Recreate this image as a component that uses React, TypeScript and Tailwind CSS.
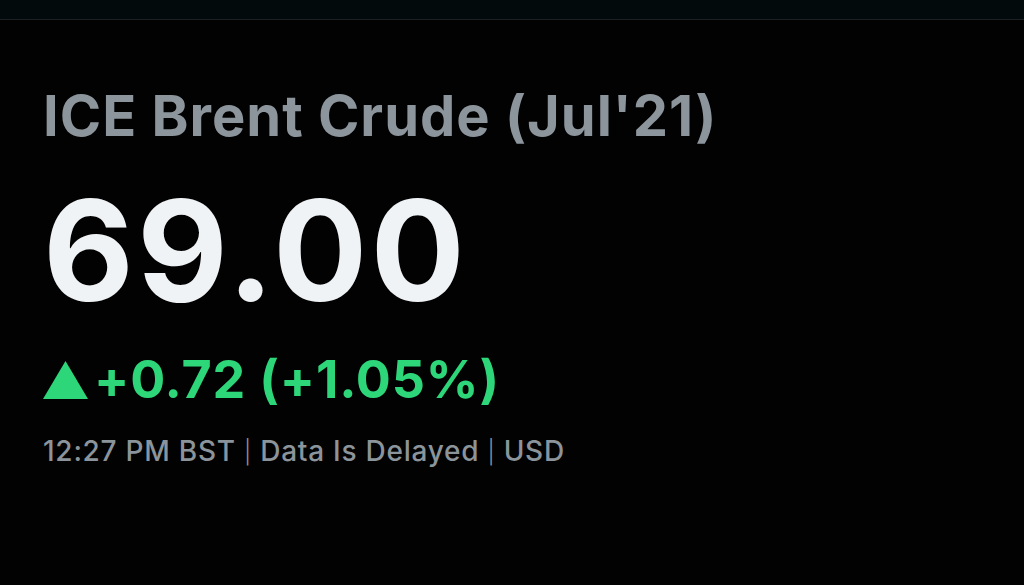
export default function App() {
  return (
    <div className="w-[1024px] h-[585px] overflow-hidden bg-[#020202] font-['Inter',sans-serif]">
      <div className="h-[20px] bg-[#020a0c] border-b border-[#1c2024]" />

      <div className="pl-[43px]">
        <h1 className="mt-[68px] text-[56px] leading-none font-bold text-[#8c959c] tracking-[1px]">
          ICE Brent Crude (Jul'21)
        </h1>

        <div className="mt-[36px] text-[140px] leading-none font-bold text-[#f0f3f5] tracking-[3.2px]">
          69.00
        </div>

        <div className="mt-[34px] flex items-center text-[52px] leading-none font-bold text-[#2ed67a]">
          <svg width="45" height="38" viewBox="0 0 45 38" className="mr-[6px] shrink-0">
            <path d="M22.5 0 L45 38 L0 38 Z" fill="#2ed67a" />
          </svg>
          <span className="tracking-[0.85px]">+0.72 (+1.05%)</span>
        </div>

        <div className="mt-[31px] text-[28px] leading-none font-medium text-[#8b949b] tracking-[0.75px]">
          12:27 PM BST <span className="text-[23px] font-light align-[1px]">|</span> Data Is Delayed{' '}
          <span className="text-[23px] font-light align-[1px]">|</span> USD
        </div>
      </div>
    </div>
  );
}
